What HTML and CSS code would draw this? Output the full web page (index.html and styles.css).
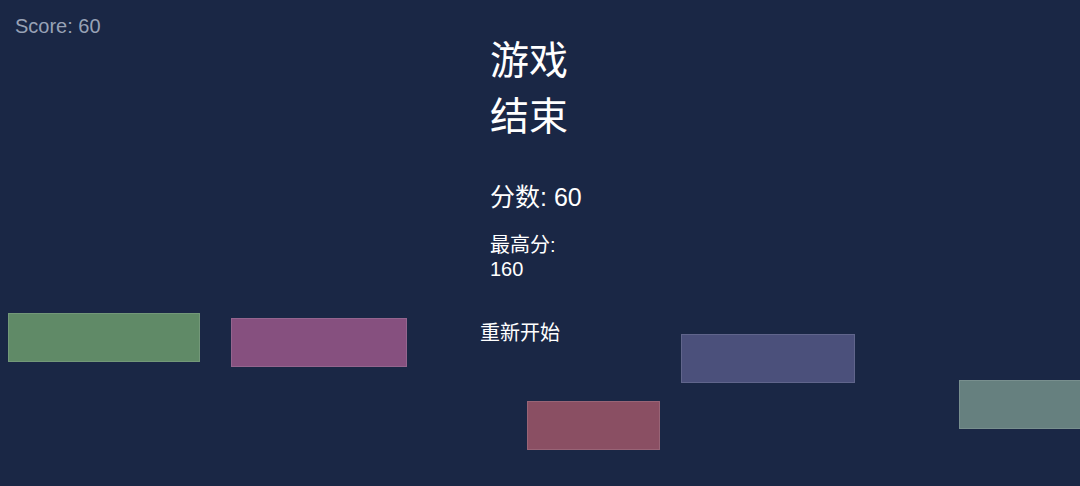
FILE: index.html
```html
<!DOCTYPE html>
<html lang="zh-CN">
<head>
  <meta charset="UTF-8" />
  <meta name="viewport" content="width=device-width, initial-scale=1" />
  <title>跳跃方块</title>
  <link rel="stylesheet" href="styles.css">
</head>
<body>
  <div class="game">
    <div class="score">Score: 60</div>

    <!-- platforms on the play field -->
    <div class="platform green" style="left: 8px; top: 313px; width: 192px;"></div>
    <div class="platform purple" style="left: 231px; top: 318px; width: 176px;"></div>
    <div class="platform red" style="left: 527px; top: 401px; width: 133px;"></div>
    <div class="platform blue" style="left: 681px; top: 334px; width: 174px;"></div>
    <div class="platform teal" style="left: 959px; top: 380px; width: 130px;"></div>

    <div class="game-over">
      <h1 class="title">游戏结束</h1>
      <p class="final-score">分数: 60</p>
      <p class="best-score">最高分: 160</p>
      <button class="restart">重新开始</button>
    </div>
  </div>
</body>
</html>
```

FILE: styles.css
```css
body {
  margin: 0;
  background: #1a2745;
  font-family: "Liberation Sans", Arial, "Noto Sans CJK SC", sans-serif;
  color: #fff;
  overflow: hidden;
}
.game {
  position: relative;
  width: 100vw;
  height: 100vh;
}
.score {
  position: absolute;
  top: 15px;
  left: 15px;
  font-size: 20px;
  color: #98a2b6;
}
/* Platforms */
.platform {
  position: absolute;
  box-sizing: border-box;
  height: 49px;
  border: 1px solid rgba(255, 255, 255, 0.12);
}
.green { background: #608a67; }
.purple { background: #86507f; }
.red { background: #8a4f63; }
.blue { background: #4b507b; }
.teal { background: #66807f; }
/* Game over panel */
.game-over {
  position: absolute;
  top: 0;
  left: 490px;
  width: 100px;
}
.title {
  font-size: 39px;
  font-weight: normal;
  margin: 29px 0 36px;
}
.final-score {
  font-size: 25px;
  margin: 0 0 16px;
}
.best-score {
  font-size: 20px;
  margin: 0 0 36px;
}
.restart {
  margin-left: -10px;
  padding: 0;
  background: none;
  border: none;
  color: #fff;
  font-family: inherit;
  font-size: 20px;
  cursor: pointer;
}
```
